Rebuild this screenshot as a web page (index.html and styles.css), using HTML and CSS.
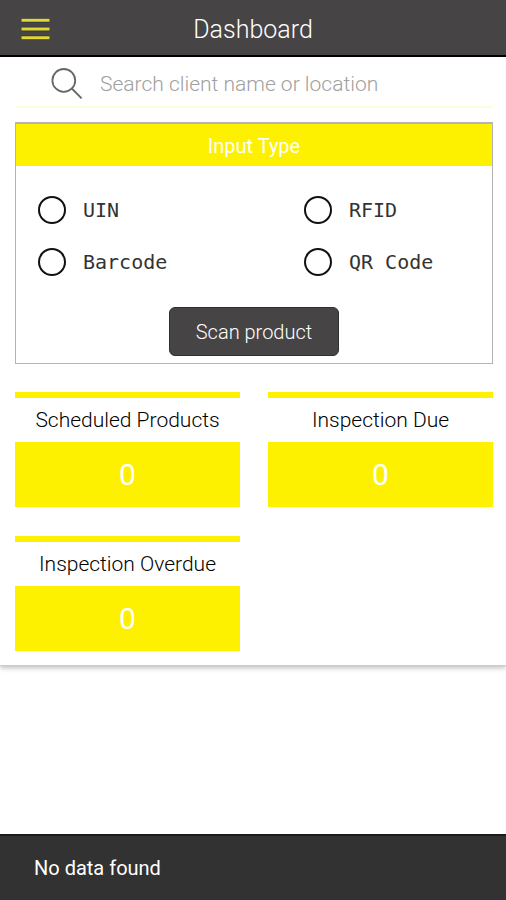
FILE: index.html
```html
<!DOCTYPE html>
<html lang="en">
<head>
<meta charset="utf-8">
<meta name="viewport" content="width=device-width, initial-scale=1">
<title>Dashboard</title>
<link rel="stylesheet" href="styles.css">
</head>
<body>
<header class="topbar">
  <button class="menu" type="button" aria-label="Menu">
    <svg width="30" height="24" viewBox="0 0 30 24" aria-hidden="true">
      <path d="M1.5 2.2h28M1.5 11h28M1.5 19.7h28" stroke="#33314c" stroke-width="4.4"/>
      <path d="M1.5 2.2h28M1.5 11h28M1.5 19.7h28" stroke="#e0d82c" stroke-width="3"/>
    </svg>
  </button>
  <h1 class="title">Dashboard</h1>
</header>
<main class="panel">
  <form class="search" role="search">
    <label class="search-icon" for="search" aria-label="Search">
      <svg width="32" height="32" viewBox="0 0 32 32" fill="none" stroke="#666" stroke-width="1.8" aria-hidden="true">
        <circle cx="12.8" cy="12.4" r="11.4"/>
        <path d="M20.8 20.5l9.8 9.8"/>
      </svg>
    </label>
    <input class="search-input" id="search" type="text" placeholder="Search client name or location">
  </form>
  <form class="card">
    <h2 class="card-title">Input Type</h2>
    <div class="options">
      <label class="option"><input type="radio" name="type">UIN</label>
      <label class="option"><input type="radio" name="type">RFID</label>
      <label class="option"><input type="radio" name="type">Barcode</label>
      <label class="option"><input type="radio" name="type">QR Code</label>
    </div>
    <button class="scan" type="button">Scan product</button>
  </form>
  <div class="stats">
    <section class="stat">
      <h2 class="stat-label">Scheduled Products</h2>
      <p class="stat-value">0</p>
    </section>
    <section class="stat">
      <h2 class="stat-label">Inspection Due</h2>
      <p class="stat-value">0</p>
    </section>
    <section class="stat">
      <h2 class="stat-label">Inspection Overdue</h2>
      <p class="stat-value">0</p>
    </section>
  </div>
</main>
<div class="toast" role="status">No data found</div>
</body>
</html>
```
FILE: styles.css
```css
* {
  box-sizing: border-box;
}

body {
  margin: 0;
  min-height: 100vh;
  display: flex;
  flex-direction: column;
  background: #fff;
  color: #111;
  font-family: Roboto, "Liberation Sans", sans-serif;
  font-weight: 300;
}

h1, h2, p {
  margin: 0;
  font-weight: 300;
}

.topbar {
  display: grid;
  grid-template-columns: 56px 1fr 56px;
  align-items: center;
  height: 57px;
  padding: 4px 0 0;
  background: #474445;
  border-bottom: 2px solid #000;
}

.menu {
  display: flex;
  margin: 0 0 0 20px;
  padding: 0;
  border: 0;
  background: none;
}

.title {
  color: #fff;
  font-size: 25px;
  line-height: 32px;
  text-align: center;
}

.panel {
  padding: 0 13px 14px 15px;
  border-bottom: 1px solid #ccc;
  box-shadow: 0 2px 5px rgba(0, 0, 0, 0.25);
}

.search {
  display: flex;
  align-items: center;
  gap: 17px;
  height: 51px;
  padding: 4px 0 0 36px;
  border-bottom: 2px solid #fdffd8;
}

.search-icon {
  display: flex;
}

.search-input {
  flex: 1;
  min-width: 0;
  padding: 0;
  border: 0;
  outline: 0;
  background: none;
  font: inherit;
  font-size: 21px;
  line-height: 28px;
}

.search-input::placeholder {
  color: #a0a0a0;
  opacity: 1;
}

.card {
  display: flex;
  flex-direction: column;
  margin-top: 14px;
  padding-bottom: 7px;
  border: 1px solid #b4b4b4;
  border-top-width: 2px;
}

.card-title {
  padding: 9px 0 7px;
  background: #fdf100;
  color: #fff;
  font-size: 20px;
  line-height: 26px;
  font-weight: 400;
  text-align: center;
}

.options {
  display: grid;
  grid-template-columns: 266px 1fr;
  row-gap: 24px;
  padding: 30px 0 31px 22px;
}

.option {
  display: flex;
  align-items: center;
  gap: 17px;
  color: #333;
  font-family: "DejaVu Sans Mono", "Liberation Mono", monospace;
  font-size: 20px;
  line-height: 28px;
}

.option input {
  appearance: none;
  width: 28px;
  height: 28px;
  margin: 0;
  border: 2px solid #111;
  border-radius: 50%;
}

.option input:checked {
  background: #111;
  box-shadow: inset 0 0 0 5px #fff;
}

.scan {
  align-self: center;
  padding: 10px 26px 9px;
  border: 1px solid #302e2f;
  border-radius: 6px;
  background: #474445;
  color: #fff;
  font: inherit;
  font-size: 20px;
  line-height: 28px;
}

.stats {
  display: grid;
  grid-template-columns: 1fr 1fr;
  gap: 29px 28px;
  margin-top: 28px;
}

.stat {
  border-top: 6px solid #fdf100;
}

.stat-label {
  padding: 8px 0;
  color: #000;
  font-size: 21px;
  line-height: 28px;
  text-align: center;
}

.stat-value {
  padding: 17px 0 16px;
  background: #fdf100;
  color: #fff;
  font-size: 30px;
  line-height: 32px;
  font-weight: 400;
  text-align: center;
}

.toast {
  margin-top: auto;
  padding: 19px 34px;
  border-top: 2px solid #1c1c1c;
  background: #323232;
  color: #fff;
  font-size: 20px;
  line-height: 26px;
  font-weight: 400;
}
```
